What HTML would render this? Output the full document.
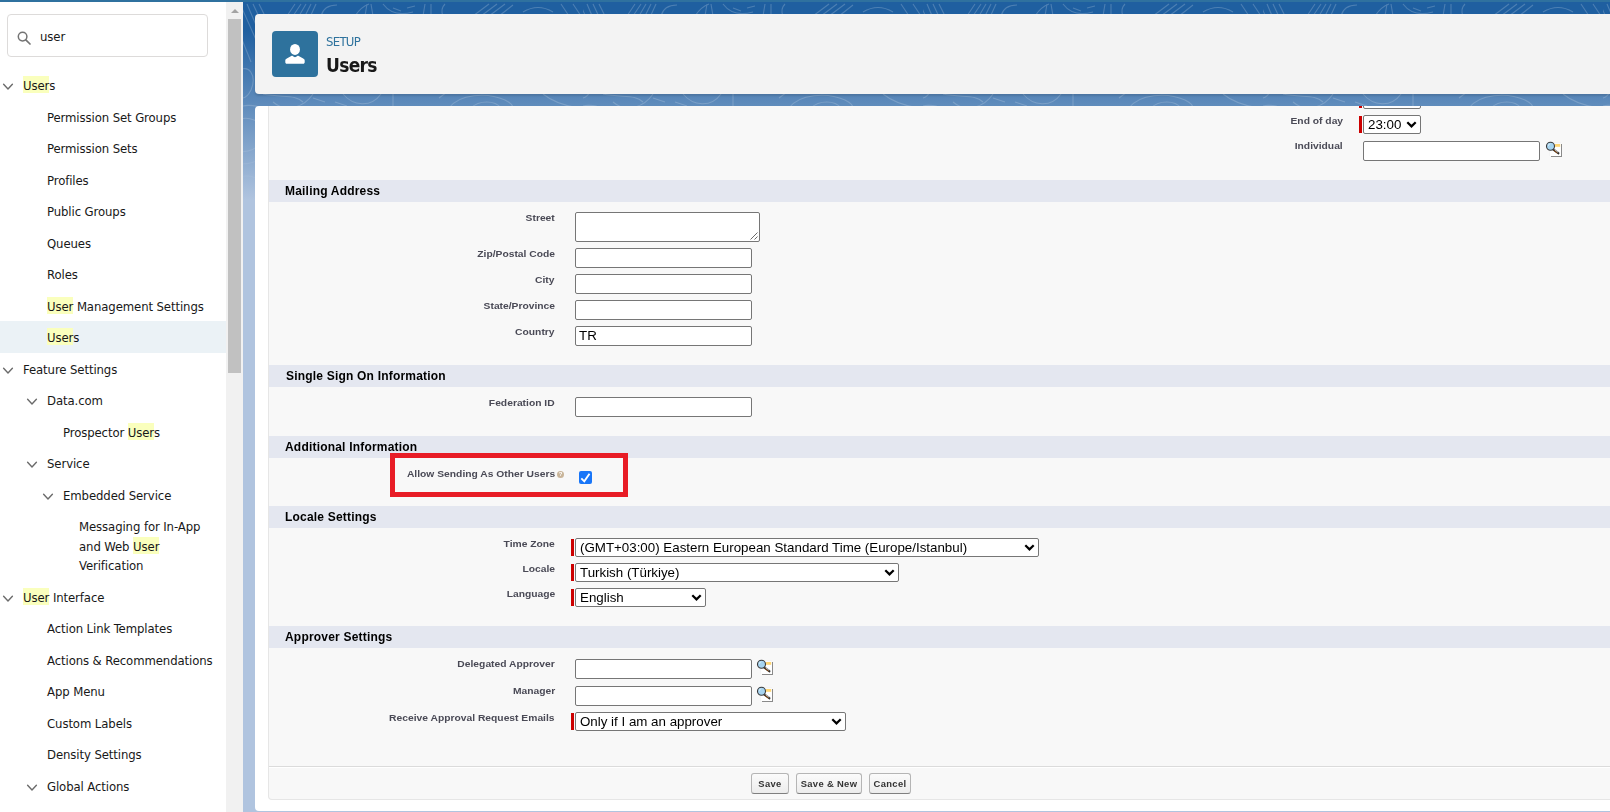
<!DOCTYPE html>
<html lang="en">
<head>
<meta charset="utf-8">
<title>Users | Salesforce</title>
<style>
*{box-sizing:border-box;margin:0;padding:0}
html,body{width:1610px;height:812px;overflow:hidden}
body{position:relative;background:#b0c4df;font-family:"Liberation Sans",Arial,sans-serif;color:#181818}
#topbar{position:absolute;left:0;top:0;width:1610px;height:2px;background:#2f719f;z-index:10}
/* ---------- left nav ---------- */
#nav{position:absolute;left:0;top:0;width:226px;height:812px;background:#fff;overflow:hidden;font-family:"DejaVu Sans Condensed","Liberation Sans",sans-serif;font-size:13px;letter-spacing:-0.1px;color:#181818}
#search{position:absolute;left:7px;top:14px;width:201px;height:43px;border:1px solid #dddbda;border-radius:4px;background:#fff}
#search svg{position:absolute;left:9px;top:16px}
#search span{position:absolute;left:32px;top:14px;font-size:13px;line-height:16px}
#tree{position:absolute;left:0;top:69.25px;width:226px}
.ni{position:relative;width:226px;padding:6px 0;line-height:19.5px}
.ni .t{display:block;white-space:nowrap;position:relative;top:.75px}
.ni.cur{background:#ebf2f6}
.ni svg{position:absolute;top:14px}
mark{background:#faffbd;color:inherit;padding:2px 0 0 0}
.l1 .t{margin-left:23px}.l2 .t{margin-left:47px}.l3 .t{margin-left:63px}.l4 .t{margin-left:79px}
.l1 svg{left:2px}.l2 svg{left:26px}.l3 svg{left:42px}
/* ---------- scrollbar ---------- */
#sb{position:absolute;left:226px;top:2px;width:17px;height:810px;background:#f1f1f1}
#sb .thumb{position:absolute;left:2px;top:17px;width:13px;height:354px;background:#c1c1c1}
#sb .up{position:absolute;left:5px;top:7px;width:0;height:0;border-left:4px solid transparent;border-right:4px solid transparent;border-bottom:4px solid #a3a3a3}
/* ---------- main ---------- */
#main{position:absolute;left:243px;top:2px;width:1367px;height:810px;overflow:hidden;background:linear-gradient(to bottom,#1f5fa0 0px,#1f5fa0 28px,#b0c4df 198px,#b0c4df 100%)}
#main svg.pat{position:absolute;left:0;top:0}
#hdr{position:absolute;left:12px;top:12px;width:1400px;height:80px;background:#f3f3f3;border-radius:4px;box-shadow:0 2px 2px rgba(0,0,0,.12)}
#hdr .ico{position:absolute;left:17px;top:17px;width:46px;height:46px;border-radius:4px;background:#2e729d}
#hdr .sup{will-change:transform;position:absolute;left:71px;top:20px;font-family:"DejaVu Sans Condensed","DejaVu Sans",sans-serif;font-size:13px;letter-spacing:-0.7px;color:#2e729d;line-height:16px}
#hdr .ttl{will-change:transform;position:absolute;left:71px;top:38px;font-family:"DejaVu Sans Condensed","Liberation Sans",sans-serif;font-weight:bold;font-size:19px;letter-spacing:-0.7px;color:#181818;line-height:26px}
#card{overflow:hidden;position:absolute;left:12px;top:104px;width:1400px;height:705px;background:#fff;border-radius:4px}
#panel{position:absolute;left:13px;top:0;width:1400px;height:694px;background:#f8f8f8;border:1px solid #e6e6e6;border-top:none;border-radius:0 0 4px 4px}
#form{will-change:transform;position:absolute;left:14px;top:0;width:1400px;height:705px}
.band{position:absolute;left:0;width:1400px;height:22px;background:#e4e7f0;font-weight:bold;font-size:12px;color:#000;line-height:22px;letter-spacing:.2px;white-space:nowrap}
.lbl{position:absolute;font-weight:bold;font-size:9.8px;transform:scaleX(1.05);transform-origin:100% 50%;color:#4a4a56;text-align:right;line-height:14px;white-space:nowrap}
.inp{position:absolute;background:#fff;border:1px solid #767676;border-radius:2px;font-size:13.33px;line-height:16px;padding:1px 3px;color:#000}
.req{position:absolute;width:3px;background:#c00}
.sel{position:absolute;background:#fff;border:1px solid #767676;border-radius:2px;font-size:13.33px;color:#000;line-height:17px;padding-left:4px;white-space:nowrap;overflow:hidden}
.sel svg{position:absolute;right:3.5px;top:5px}
.btn{position:absolute;height:21px;border:1px solid #b5b5b5;border-bottom-color:#7f7f7f;border-radius:3px;background:linear-gradient(#fbfbfb,#ececec);font-weight:bold;font-size:9.4px;letter-spacing:.35px;color:#333;line-height:19.5px;text-align:center;white-space:nowrap}
.ftl{position:absolute;left:0;width:1400px;height:2px;background:#dbdbdb;border-bottom:1px solid #fff}
.cb{position:absolute;width:13px;height:13px;background:#1976f8;border-radius:2px}
.cb svg{position:absolute;left:0;top:0}
.hl{position:absolute;border:5px solid #e81c26}
.hp{position:absolute;width:7px;height:7px;border-radius:3.5px;background:#c9b59a;color:#fff;font-size:6px;line-height:7px;text-align:center;font-weight:bold}
</style>
</head>
<body>
<div id="topbar"></div>

<div id="nav">
  <div id="search">
    <svg width="14" height="14" viewBox="0 0 14 14"><circle cx="5.6" cy="5.6" r="4.3" fill="none" stroke="#747474" stroke-width="1.5"/><path d="M8.8 8.8 L13 13" stroke="#747474" stroke-width="1.7" stroke-linecap="round"/></svg>
    <span>user</span>
  </div>
  <div id="tree">
<div class="ni l1"><svg width="12" height="8" viewBox="0 0 12 8"><path d="M1.6 1.3 L6 5.9 L10.4 1.3" fill="none" stroke="#6b6b6b" stroke-width="1.4" stroke-linecap="round" stroke-linejoin="round"/></svg><span class="t"><mark>User</mark>s</span></div>
<div class="ni l2"><span class="t">Permission Set Groups</span></div>
<div class="ni l2"><span class="t">Permission Sets</span></div>
<div class="ni l2"><span class="t">Profiles</span></div>
<div class="ni l2"><span class="t">Public Groups</span></div>
<div class="ni l2"><span class="t">Queues</span></div>
<div class="ni l2"><span class="t">Roles</span></div>
<div class="ni l2"><span class="t"><mark>User</mark> Management Settings</span></div>
<div class="ni l2 cur"><span class="t"><mark>User</mark>s</span></div>
<div class="ni l1"><svg width="12" height="8" viewBox="0 0 12 8"><path d="M1.6 1.3 L6 5.9 L10.4 1.3" fill="none" stroke="#6b6b6b" stroke-width="1.4" stroke-linecap="round" stroke-linejoin="round"/></svg><span class="t">Feature Settings</span></div>
<div class="ni l2"><svg width="12" height="8" viewBox="0 0 12 8"><path d="M1.6 1.3 L6 5.9 L10.4 1.3" fill="none" stroke="#6b6b6b" stroke-width="1.4" stroke-linecap="round" stroke-linejoin="round"/></svg><span class="t">Data.com</span></div>
<div class="ni l3"><span class="t">Prospector <mark>User</mark>s</span></div>
<div class="ni l2"><svg width="12" height="8" viewBox="0 0 12 8"><path d="M1.6 1.3 L6 5.9 L10.4 1.3" fill="none" stroke="#6b6b6b" stroke-width="1.4" stroke-linecap="round" stroke-linejoin="round"/></svg><span class="t">Service</span></div>
<div class="ni l3"><svg width="12" height="8" viewBox="0 0 12 8"><path d="M1.6 1.3 L6 5.9 L10.4 1.3" fill="none" stroke="#6b6b6b" stroke-width="1.4" stroke-linecap="round" stroke-linejoin="round"/></svg><span class="t">Embedded Service</span></div>
<div class="ni l4"><span class="t">Messaging for In-App<br>and Web <mark>User</mark><br>Verification</span></div>
<div class="ni l1"><svg width="12" height="8" viewBox="0 0 12 8"><path d="M1.6 1.3 L6 5.9 L10.4 1.3" fill="none" stroke="#6b6b6b" stroke-width="1.4" stroke-linecap="round" stroke-linejoin="round"/></svg><span class="t"><mark>User</mark> Interface</span></div>
<div class="ni l2"><span class="t">Action Link Templates</span></div>
<div class="ni l2"><span class="t">Actions &amp; Recommendations</span></div>
<div class="ni l2"><span class="t">App Menu</span></div>
<div class="ni l2"><span class="t">Custom Labels</span></div>
<div class="ni l2"><span class="t">Density Settings</span></div>
<div class="ni l2"><svg width="12" height="8" viewBox="0 0 12 8"><path d="M1.6 1.3 L6 5.9 L10.4 1.3" fill="none" stroke="#6b6b6b" stroke-width="1.4" stroke-linecap="round" stroke-linejoin="round"/></svg><span class="t">Global Actions</span></div>
<div class="ni l3"><span class="t">Actions</span></div>

  </div>
</div>

<div id="sb"><div class="up"></div><div class="thumb"></div></div>

<div id="main">
<svg class="pat" width="1367" height="200" viewBox="0 0 1367 200">
<defs>
<linearGradient id="fd" x1="0" y1="0" x2="0" y2="1"><stop offset="0" stop-color="#fff" stop-opacity="1"/><stop offset=".55" stop-color="#fff" stop-opacity=".9"/><stop offset="1" stop-color="#fff" stop-opacity="0"/></linearGradient>
<mask id="mk"><rect x="0" y="0" width="1367" height="200" fill="url(#fd)"/></mask>
<pattern id="topo" width="340" height="200" patternUnits="userSpaceOnUse">
<g fill="none" stroke="#fff" stroke-opacity=".2" stroke-width="1.1">
<path d="M-2 4 L14 40 M4 2 L22 44 M10 2 L26 36 M16 2 L28 26 M-4 30 L8 60"/>
<path d="M44 14 L52 2 M50 14 L58 2 M56 14 L63 2 M62 14 L68 2 M68 13 L73 2"/>
<path d="M78 14 C80 6 86 3 94 3"/>
<path d="M112 14 C116 8 120 4 126 2 M122 14 L124 2 M130 14 L128 2"/>
<path d="M140 2 C146 10 156 14 170 10 M150 6 L158 9 M164 6 L172 4"/>
<path d="M180 14 L182 2 M188 14 L188 2 M200 14 C198 9 199 5 202 2"/>
<path d="M230 14 L246 2 M238 14 L254 2 M246 14 L262 2 M256 14 L270 3"/>
<path d="M280 10 C290 4 300 4 310 10 M318 2 L326 14 M330 2 L338 14"/>
<path d="M-6 70 C6 60 14 74 8 88 C2 100 -4 96 -8 92"/>
<path d="M-10 120 C4 112 22 118 20 134 C18 148 2 152 -8 148"/>
<path d="M-10 108 C10 96 34 108 32 134 C30 156 6 166 -10 160"/>
<path d="M-6 176 C8 170 20 178 26 190"/>
<path d="M20 92 C40 96 52 92 60 100 M70 96 L82 100 M92 100 L104 104"/>
<path d="M30 100 C44 112 62 104 70 92"/>
<path d="M100 92 C110 104 128 106 138 92"/>
<path d="M150 92 L150 106 M196 96 L204 90"/>
<path d="M206 106 C216 92 244 90 262 98 C268 101 270 104 270 106"/>
<path d="M228 106 C236 98 252 98 258 106"/>
<path d="M300 92 C310 100 322 104 336 106"/>
</g>
</pattern>
</defs>
<rect x="0" y="0" width="1367" height="200" fill="url(#topo)" mask="url(#mk)"/>
</svg>
  <div id="hdr">
    <div class="ico"><svg width="46" height="46" viewBox="0 0 46 46"><ellipse cx="23" cy="18.45" rx="4.95" ry="5.5" fill="#fff"/><path d="M13.3 29.6 C13.3 28.6 13.9 28 14.8 27.5 L19.3 24.9 C19.8 24.6 20.3 24.7 20.7 25 C22 26.5 24 26.5 25.3 25 C25.7 24.7 26.2 24.6 26.7 24.9 L31.2 27.5 C32.1 28 32.7 28.6 32.7 29.6 L32.7 31.3 C32.7 32.2 32.1 32.8 31.2 32.8 L14.8 32.8 C13.9 32.8 13.3 32.2 13.3 31.3 Z" fill="#fff"/></svg></div>
    <div class="sup">SETUP</div>
    <div class="ttl">Users</div>
  </div>
  <div id="card">
    <div id="panel"></div>
    <div id="form">
<div class="req" style="left:1090px;top:-6px;height:8px"></div><div class="sel" style="left:1094px;top:-16px;width:58px;height:19px"></div>
<div class="lbl" style="right:326px;top:7.6px">End of day</div>
<div class="req" style="left:1090px;top:10px;height:17px"></div><div class="sel" style="left:1094px;top:9px;width:58px;height:19px">23:00<svg width="11" height="7" viewBox="0 0 11 7"><path d="M1.3 1.2 L5.5 5.4 L9.7 1.2" fill="none" stroke="#000" stroke-width="2.2" stroke-linecap="butt" stroke-linejoin="miter"/></svg></div>
<div class="lbl" style="right:326px;top:32.5px">Individual</div>
<div class="inp" style="left:1094px;top:35px;width:177px;height:20px"></div>
<div style="position:absolute;left:1276px;top:34px;width:18px;height:18px"><svg class="lk" width="18" height="18" viewBox="0 0 18 18"><rect x="6" y="4" width="11" height="13" fill="#8a8a8a"/><rect x="4.5" y="3" width="11.5" height="13" fill="#fff"/><path d="M4.5 3 L16 3" stroke="#ececec" stroke-width=".6"/><path d="M4.6 3 L4.6 16" stroke="#ececec" stroke-width=".6"/><rect x="9.9" y="4" width="5.3" height="2.8" fill="#ffd675"/><path d="M8.2 9.3 L13.3 13.2" stroke="#2a2a2a" stroke-width="2.3" stroke-linecap="round"/><path d="M8.6 10.2 L12.6 13.3" stroke="#a04a00" stroke-width=".8"/><path d="M9.6 9.6 L13.2 12.4" stroke="#fff" stroke-width=".8"/><circle cx="5.5" cy="6.3" r="4" fill="#a6d4f0" stroke="#3a3a3a" stroke-width="1.1"/><path d="M2.9 6.4 C2.9 4.6 4.2 3.6 5.8 3.6 C4.6 4.2 3.6 5.2 2.9 6.4 Z" fill="#eaf6fd"/></svg></div>
<div class="band" style="top:74px;padding-left:16px">Mailing Address</div>
<div class="lbl" style="right:1114px;top:104.9px">Street</div>
<div class="inp ta" style="left:306px;top:106px;width:185px;height:30px"><svg width="9" height="9" viewBox="0 0 9 9" style="position:absolute;right:1px;bottom:1px"><path d="M8.5 1.5 L1.5 8.5 M8.5 5.5 L5.5 8.5" stroke="#6a6a6a" stroke-width="1"/></svg></div>
<div class="lbl" style="right:1114px;top:141.0px">Zip/Postal Code</div>
<div class="inp" style="left:306px;top:142px;width:177px;height:20px"></div>
<div class="lbl" style="right:1114px;top:167.0px">City</div>
<div class="inp" style="left:306px;top:168px;width:177px;height:20px"></div>
<div class="lbl" style="right:1114px;top:193.0px">State/Province</div>
<div class="inp" style="left:306px;top:194px;width:177px;height:20px"></div>
<div class="lbl" style="right:1114px;top:219.0px">Country</div>
<div class="inp" style="left:306px;top:220px;width:177px;height:20px">TR</div>
<div class="band" style="top:259px;padding-left:17px">Single Sign On Information</div>
<div class="lbl" style="right:1114px;top:289.8px">Federation ID</div>
<div class="inp" style="left:306px;top:291px;width:177px;height:20px"></div>
<div class="band" style="top:330px;padding-left:16px">Additional Information</div>
<div class="lbl" style="right:1114px;top:360.8px">Allow Sending As Other Users</div>
<div class="hp" style="left:288px;top:365px">?</div>
<div class="cb" style="left:310px;top:365px"><svg width="13" height="13" viewBox="0 0 13 13"><path d="M2.3 7.3 L5.3 10.3 L10.5 2.8" fill="none" stroke="#fff" stroke-width="1.9"/></svg></div>
<div class="hl" style="left:121px;top:347px;width:238px;height:44px"></div>
<div class="band" style="top:400px;padding-left:16px">Locale Settings</div>
<div class="lbl" style="right:1114px;top:430.9px">Time Zone</div>
<div class="req" style="left:302px;top:433px;height:17px"></div><div class="sel" style="left:306px;top:432px;width:464px;height:19px">(GMT+03:00) Eastern European Standard Time (Europe/Istanbul)<svg width="11" height="7" viewBox="0 0 11 7"><path d="M1.3 1.2 L5.5 5.4 L9.7 1.2" fill="none" stroke="#000" stroke-width="2.2" stroke-linecap="butt" stroke-linejoin="miter"/></svg></div>
<div class="lbl" style="right:1114px;top:455.9px">Locale</div>
<div class="req" style="left:302px;top:458px;height:17px"></div><div class="sel" style="left:306px;top:457px;width:324px;height:19px">Turkish (Türkiye)<svg width="11" height="7" viewBox="0 0 11 7"><path d="M1.3 1.2 L5.5 5.4 L9.7 1.2" fill="none" stroke="#000" stroke-width="2.2" stroke-linecap="butt" stroke-linejoin="miter"/></svg></div>
<div class="lbl" style="right:1114px;top:481.2px">Language</div>
<div class="req" style="left:302px;top:483px;height:17px"></div><div class="sel" style="left:306px;top:482px;width:131px;height:19px">English<svg width="11" height="7" viewBox="0 0 11 7"><path d="M1.3 1.2 L5.5 5.4 L9.7 1.2" fill="none" stroke="#000" stroke-width="2.2" stroke-linecap="butt" stroke-linejoin="miter"/></svg></div>
<div class="band" style="top:520px;padding-left:16px">Approver Settings</div>
<div class="lbl" style="right:1114px;top:550.9px">Delegated Approver</div>
<div class="inp" style="left:306px;top:553px;width:177px;height:20px"></div>
<div style="position:absolute;left:487px;top:552px;width:18px;height:18px"><svg class="lk" width="18" height="18" viewBox="0 0 18 18"><rect x="6" y="4" width="11" height="13" fill="#8a8a8a"/><rect x="4.5" y="3" width="11.5" height="13" fill="#fff"/><path d="M4.5 3 L16 3" stroke="#ececec" stroke-width=".6"/><path d="M4.6 3 L4.6 16" stroke="#ececec" stroke-width=".6"/><rect x="9.9" y="4" width="5.3" height="2.8" fill="#ffd675"/><path d="M8.2 9.3 L13.3 13.2" stroke="#2a2a2a" stroke-width="2.3" stroke-linecap="round"/><path d="M8.6 10.2 L12.6 13.3" stroke="#a04a00" stroke-width=".8"/><path d="M9.6 9.6 L13.2 12.4" stroke="#fff" stroke-width=".8"/><circle cx="5.5" cy="6.3" r="4" fill="#a6d4f0" stroke="#3a3a3a" stroke-width="1.1"/><path d="M2.9 6.4 C2.9 4.6 4.2 3.6 5.8 3.6 C4.6 4.2 3.6 5.2 2.9 6.4 Z" fill="#eaf6fd"/></svg></div>
<div class="lbl" style="right:1114px;top:577.7px">Manager</div>
<div class="inp" style="left:306px;top:580px;width:177px;height:20px"></div>
<div style="position:absolute;left:487px;top:579px;width:18px;height:18px"><svg class="lk" width="18" height="18" viewBox="0 0 18 18"><rect x="6" y="4" width="11" height="13" fill="#8a8a8a"/><rect x="4.5" y="3" width="11.5" height="13" fill="#fff"/><path d="M4.5 3 L16 3" stroke="#ececec" stroke-width=".6"/><path d="M4.6 3 L4.6 16" stroke="#ececec" stroke-width=".6"/><rect x="9.9" y="4" width="5.3" height="2.8" fill="#ffd675"/><path d="M8.2 9.3 L13.3 13.2" stroke="#2a2a2a" stroke-width="2.3" stroke-linecap="round"/><path d="M8.6 10.2 L12.6 13.3" stroke="#a04a00" stroke-width=".8"/><path d="M9.6 9.6 L13.2 12.4" stroke="#fff" stroke-width=".8"/><circle cx="5.5" cy="6.3" r="4" fill="#a6d4f0" stroke="#3a3a3a" stroke-width="1.1"/><path d="M2.9 6.4 C2.9 4.6 4.2 3.6 5.8 3.6 C4.6 4.2 3.6 5.2 2.9 6.4 Z" fill="#eaf6fd"/></svg></div>
<div class="lbl" style="right:1114px;top:604.9px">Receive Approval Request Emails</div>
<div class="req" style="left:302px;top:607px;height:17px"></div><div class="sel" style="left:306px;top:606px;width:271px;height:19px">Only if I am an approver<svg width="11" height="7" viewBox="0 0 11 7"><path d="M1.3 1.2 L5.5 5.4 L9.7 1.2" fill="none" stroke="#000" stroke-width="2.2" stroke-linecap="butt" stroke-linejoin="miter"/></svg></div>
<div class="ftl" style="top:660px"></div>
<div class="btn" style="left:482px;top:667px;width:38px">Save</div>
<div class="btn" style="left:527px;top:667px;width:66px">Save &amp; New</div>
<div class="btn" style="left:600px;top:667px;width:42px">Cancel</div>

    </div>
  </div>
</div>
</body>
</html>
